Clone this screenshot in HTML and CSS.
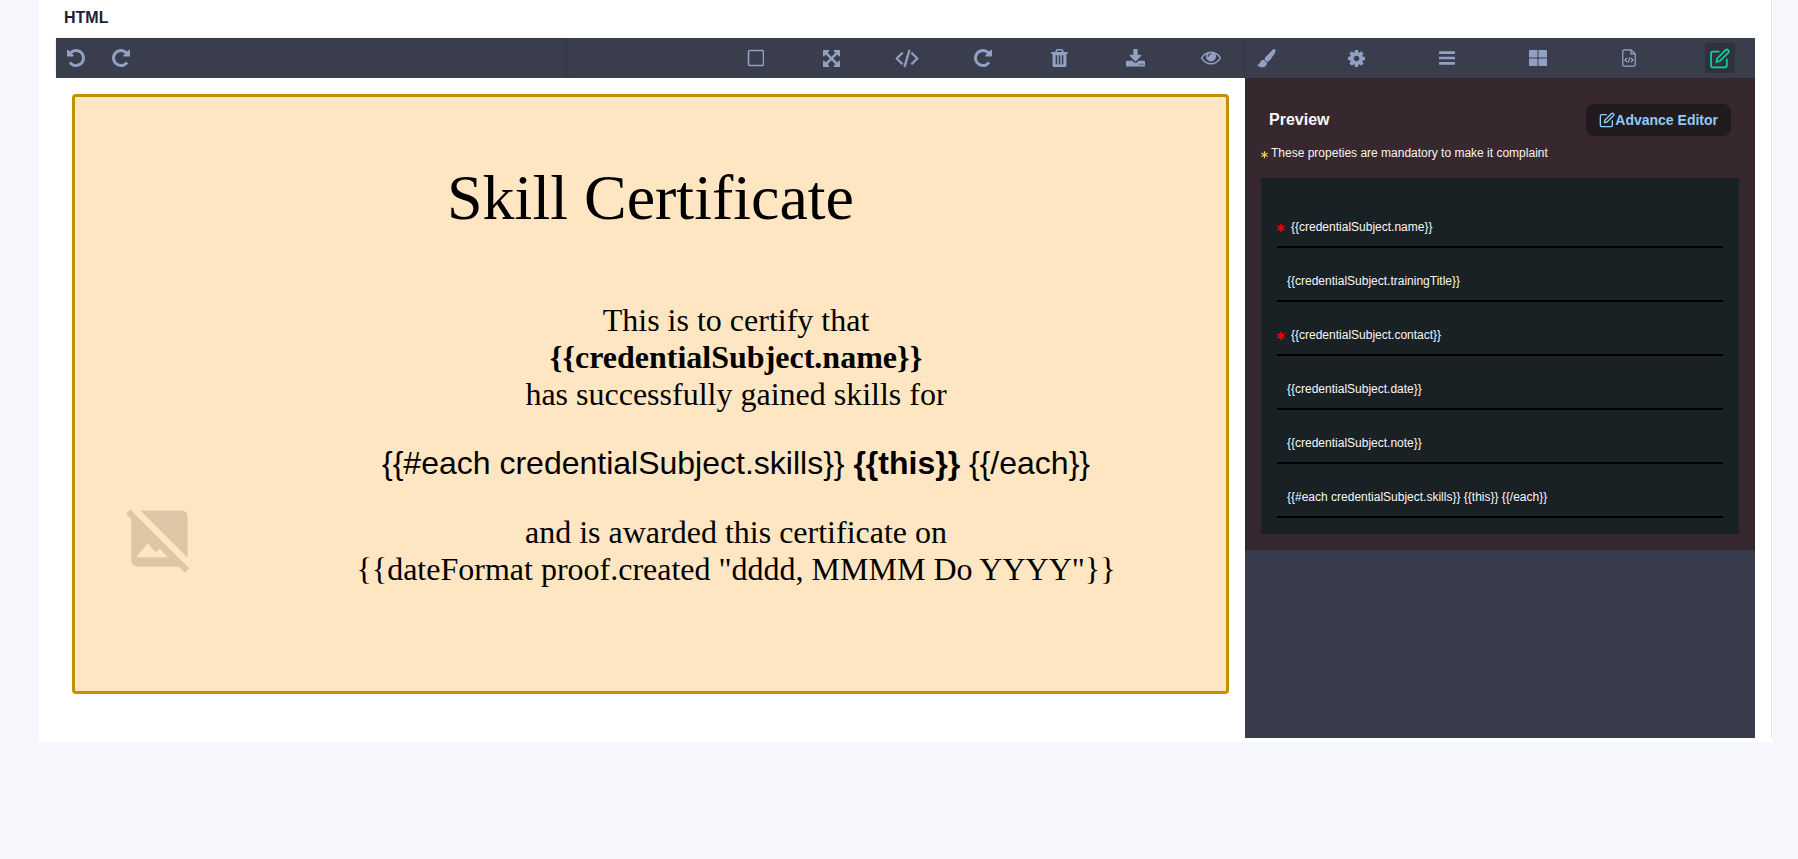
FILE: index.html
```html
<!DOCTYPE html>
<html lang="en">
<head>
<meta charset="utf-8">
<title>HTML</title>
<link rel="stylesheet" href="styles.css">
</head>
<body>
<main class="card">
  <div class="inner">
    <header class="title-bar">HTML</header>
    <section class="editor">
      <nav class="toolbar">
        <div class="tool-left">
          <button class="tool"><svg class="ic ic-undo" viewBox="128 128 1536 1536"><path d="M1664 256v448q0 26-19 45t-45 19h-448q-42 0-59-40-17-39 14-69l138-138q-148-137-349-137-104 0-198.500 40.500t-163.500 109.500-109.500 163.500-40.500 198.500 40.500 198.500 109.500 163.500 163.500 109.500 198.500 40.500q119 0 225-52t179-147q7-10 23-12 14 0 25 9l137 138q9 8 9.500 20.500t-7.500 22.500q-109 132-264 204.500t-327 72.500q-156 0-298-61t-245-164-164-245-61-298 61-298 164-245 245-164 298-61q147 0 284.500 55.500t244.500 156.500l130-129q29-31 70-14 39 17 39 59z"/></svg></button>
          <button class="tool"><svg class="ic" viewBox="128 128 1536 1536"><path d="M1664 256v448q0 26-19 45t-45 19h-448q-42 0-59-40-17-39 14-69l138-138q-148-137-349-137-104 0-198.500 40.500t-163.500 109.500-109.500 163.500-40.500 198.500 40.500 198.500 109.500 163.500 163.500 109.500 198.500 40.500q119 0 225-52t179-147q7-10 23-12 14 0 25 9l137 138q9 8 9.500 20.500t-7.500 22.500q-109 132-264 204.500t-327 72.500q-156 0-298-61t-245-164-164-245-61-298 61-298 164-245 245-164 298-61q147 0 284.500 55.500t244.500 156.500l130-129q29-31 70-14 39 17 39 59z"/></svg></button>
        </div>
        <div class="tool-mid">
          <button class="tool-wide"><svg class="ic ic-sq" viewBox="-1 0 18 18"><rect x="1.500" y="1.500" width="15" height="15" rx="1.500"/></svg></button>
          <button class="tool-wide"><svg class="ic ic-17" viewBox="128 128 1536 1536"><path d="M1411 541l-355 355 355 355 144-144q29-31 70-14 39 17 39 59v448q0 26-19 45t-45 19h-448q-42 0-59-40-17-39 14-69l144-144-355-355-355 355 144 144q31 30 14 69-17 40-59 40H192q-26 0-45-19t-19-45v-448q0-42 40-59 39-17 69 14l144 144 355-355-355-355-144 144q-19 19-45 19-12 0-24-5-40-17-40-59V192q0-26 19-45t45-19h448q42 0 59 40 17 39-14 69L541 381l355 355 355-355-144-144q-31-30-14-69 17-40 59-40h448q26 0 45 19t19 45v448q0 42-39 59-13 5-25 5-26 0-45-19z"/></svg></button>
          <button class="tool-wide"><svg class="ic ic-code" viewBox="-60 30 1912 1860"><path d="M553 1399l-50 50q-10 10-23 10t-23-10L-9 983q-10-10-10-23t10-23l466-466q10-10 23-10t23 10l50 50q10 10 10 23t-10 23L160 960l393 393q10 10 10 23t-10 23zm591-1067L771 1623q-4 13-15.500 19.500T732 1645l-62-17q-13-4-19.500-15.500T648 1588l373-1291q4-13 15.500-19.500t23.500-2.500l62 17q13 4 19.500 15.500t2.500 24.500zm657 651l-466 466q-10 10-23 10t-23-10l-50-50q-10-10-10-23t10-23l393-393-393-393q-10-10-10-23t10-23l50-50q10-10 23-10t23 10l466 466q10 10 10 23t-10 23z"/></svg></button>
          <button class="tool-wide"><svg class="ic" viewBox="128 128 1536 1536"><path d="M1664 256v448q0 26-19 45t-45 19h-448q-42 0-59-40-17-39 14-69l138-138q-148-137-349-137-104 0-198.500 40.500t-163.500 109.500-109.500 163.500-40.500 198.500 40.500 198.500 109.500 163.500 163.500 109.500 198.500 40.500q119 0 225-52t179-147q7-10 23-12 14 0 25 9l137 138q9 8 9.500 20.500t-7.500 22.500q-109 132-264 204.500t-327 72.500q-156 0-298-61t-245-164-164-245-61-298 61-298 164-245 245-164 298-61q147 0 284.500 55.500t244.500 156.500l130-129q29-31 70-14 39 17 39 59z"/></svg></button>
          <button class="tool-wide"><svg class="ic ic-trash" viewBox="192 128 1408 1536"><path d="M704 1376V672q0-14-9-23t-23-9h-64q-14 0-23 9t-9 23v704q0 14 9 23t23 9h64q14 0 23-9t9-23zm256 0V672q0-14-9-23t-23-9h-64q-14 0-23 9t-9 23v704q0 14 9 23t23 9h64q14 0 23-9t9-23zm256 0V672q0-14-9-23t-23-9h-64q-14 0-23 9t-9 23v704q0 14 9 23t23 9h64q14 0 23-9t9-23zM672 384h448l-48-117q-7-9-17-11H738q-10 2-17 11zm928 32v64q0 14-9 23t-23 9h-96v948q0 83-47 143.500t-113 60.500H480q-66 0-113-58.500T320 1464V512h-96q-14 0-23-9t-9-23v-64q0-14 9-23t23-9h309l70-167q15-37 54-63t79-26h320q40 0 79 26t54 63l70 167h309q14 0 23 9t9 23z"/></svg></button>
          <button class="tool-wide"><svg class="ic ic-down" viewBox="64 0 1664 1536"><path d="M1344 1344q0-26-19-45t-45-19-45 19-19 45 19 45 45 19 45-19 19-45zm256 0q0-26-19-45t-45-19-45 19-19 45 19 45 45 19 45-19 19-45zm128-224v320q0 40-28 68t-68 28H160q-40 0-68-28t-28-68v-320q0-40 28-68t68-28h465l135 136q58 56 136 56t136-56l136-136h464q40 0 68 28t28 68zm-325-569q17 41-14 70l-448 448q-18 19-45 19t-45-19L403 621q-31-29-14-70 17-39 59-39h256V64q0-26 19-45t45-19h256q26 0 45 19t19 45v448h256q42 0 59 39z"/></svg></button>
          <button class="tool-wide"><svg class="ic ic-eye" viewBox="0 64 1792 1792"><path d="M1664 960q-152-236-381-353 61 104 61 225 0 185-131.500 316.500T896 1280t-316.500-131.500T448 832q0-121 61-225-229 117-381 353 133 205 333.500 326.500T896 1408t434.500-121.500T1664 960zM944 576q0-20-14-34t-34-14q-125 0-214.500 89.500T592 832q0 20 14 34t34 14 34-14 14-34q0-86 61-147t147-61q20 0 34-14t14-34zm848 384q0 34-20 69-140 230-376.500 368.500T896 1536t-499.500-139T20 1029Q0 994 0 960t20-69q140-229 376.500-368T896 384t499.500 139T1772 891q20 35 20 69z"/></svg></button>
        </div>
        <div class="tool-right">
          <button class="tool"><svg class="ic ic-brush" viewBox="-1.700 0 24 24"><path d="M21 1.500c1.200 1 .9 2.600.1 4-2 3.500-5 8-7 9.500-1.200.9-3 .8-4-.3s-1-2.800 0-4C11.900 8.500 16 4.500 18.500 2c.8-.7 1.800-1.100 2.500-.5zM8.600 13.500c.6 1.500 2 2.700 3.600 3-.1 2.800-2 5.500-5.500 5.500-2.500 0-5-1-6-3.500 1.500.8 2.500-.2 3-1.500.8-2.500 2.700-3.500 4.900-3.500z"/></svg></button>
          <button class="tool"><svg class="ic ic-17" viewBox="128 128 1536 1536"><path d="M1152 896q0-106-75-181t-181-75-181 75-75 181 75 181 181 75 181-75 75-181zm512-109v222q0 12-8 23t-20 13l-185 28q-19 54-39 91 35 50 107 138 10 12 10 25t-9 23q-27 37-99 108t-94 71q-12 0-26-9l-138-108q-44 23-91 38-16 136-29 186-7 28-36 28H785q-14 0-24.500-8.500T749 1634l-28-184q-49-16-90-37l-141 107q-10 9-25 9-14 0-25-11-126-114-165-168-7-10-7-23 0-12 8-23 15-21 51-66.500t54-70.500q-27-50-41-99l-183-27q-13-2-21-12.500t-8-23.500V783q0-12 8-23t19-13l186-28q14-46 39-92-40-57-107-138-10-12-10-24 0-10 9-23 26-36 98.500-107.500T465 263q13 0 26 10l138 107q44-23 91-38 16-136 29-186 7-28 36-28h222q14 0 24.500 8.500T1043 158l28 184q49 16 90 37l142-107q9-9 24-9 13 0 25 10 129 119 165 170 7 8 7 22 0 12-8 23-15 21-51 66.500t-54 70.500q26 50 41 98l183 28q13 2 21 12.500t8 23.500z"/></svg></button>
          <button class="tool"><svg class="ic ic-bars" viewBox="128 128 1536 1536"><path d="M1664 1344v128q0 26-19 45t-45 19H192q-26 0-45-19t-19-45v-128q0-26 19-45t45-19h1408q26 0 45 19t19 45zm0-512v128q0 26-19 45t-45 19H192q-26 0-45-19t-19-45V832q0-26 19-45t45-19h1408q26 0 45 19t19 45zm0-512v128q0 26-19 45t-45 19H192q-26 0-45-19t-19-45V320q0-26 19-45t45-19h1408q26 0 45 19t19 45z"/></svg></button>
          <button class="tool"><svg class="ic ic-grid" viewBox="0 0 18 16"><rect x="0" y="0" width="8.500" height="7.500" rx=".6"/><rect x="9.500" y="0" width="8.500" height="7.500" rx=".6"/><rect x="0" y="8.500" width="8.500" height="7.500" rx=".6"/><rect x="9.500" y="8.500" width="8.500" height="7.500" rx=".6"/></svg></button>
          <button class="tool"><svg class="ic ic-file" viewBox="0 0 14 18"><path d="M9 .8H2.200A1.400 1.400 0 0 0 .8 2.200v13.600a1.400 1.400 0 0 0 1.400 1.400h9.600a1.400 1.400 0 0 0 1.400-1.400V4.800z"/><path d="M9 .8v4h4.200M5 9l-2 2 2 2M9 9l2 2-2 2M7.800 8.300l-1.600 5.400"/></svg></button>
          <button class="tool tool-active"><svg class="ic-edit" viewBox="0.800 0 24 24"><path d="M11 4H4a2 2 0 0 0-2 2v14a2 2 0 0 0 2 2h14a2 2 0 0 0 2-2v-7"/><path d="M18.500 2.500a2.121 2.121 0 0 1 3 3L12 15l-4 1 1-4 9.500-9.500z"/></svg></button>
        </div>
      </nav>
      <div class="stage">
        <div class="canvas">
          <article class="cert">
            <h1 class="cert-title">Skill Certificate</h1>
            <div class="cert-row">
              <div class="cert-media">
                <svg class="placeholder" viewBox="0 0 24 24"><path class="ph-fill" d="M21 18.150 5.850 3H19a2 2 0 0 1 2 2z"/><path class="ph-fill" fill-rule="evenodd" d="M20.100 22.900 18.180 21H5a2 2 0 0 1-2-2V5.820L1.300 4.100 2.700 2.700l18.800 18.800zM4.500 18h10.200l-2.700-2.700-1.300 1.100-2.450-2.900z"/></svg>
              </div>
              <div class="cert-body">
                <p class="cert-p">This is to certify that<br><b>{{credentialSubject.name}}</b><br>has successfully gained skills for</p>
                <p class="cert-p cert-sans">{{#each credentialSubject.skills}} <b>{{this}}</b> {{/each}}</p>
                <p class="cert-p">and is awarded this certificate on<br>{{dateFormat proof.created "dddd, MMMM Do YYYY"}}</p>
              </div>
            </div>
          </article>
        </div>
        <aside class="side">
          <div class="preview">
            <div class="preview-head">
              <h2 class="preview-title">Preview</h2>
              <button class="adv-btn"><svg class="adv-ic" viewBox="0 0 24 24"><path d="M11 4H4a2 2 0 0 0-2 2v14a2 2 0 0 0 2 2h14a2 2 0 0 0 2-2v-7"/><path d="M18.500 2.500a2.121 2.121 0 0 1 3 3L12 15l-4 1 1-4 9.500-9.500z"/></svg>Advance Editor</button>
            </div>
            <p class="note"><svg class="star star-y" viewBox="0 0 8 8"><path d="M4 0v8M.5 2l7 4M7.500 2l-7 4"/></svg>These propeties are mandatory to make it complaint</p>
            <div class="fields">
              <div class="field field-req"><svg class="star star-r" viewBox="0 0 8 8"><path d="M4 0v8M.5 2l7 4M7.500 2l-7 4"/></svg>{{credentialSubject.name}}</div>
              <div class="field">{{credentialSubject.trainingTitle}}</div>
              <div class="field field-req"><svg class="star star-r" viewBox="0 0 8 8"><path d="M4 0v8M.5 2l7 4M7.500 2l-7 4"/></svg>{{credentialSubject.contact}}</div>
              <div class="field">{{credentialSubject.date}}</div>
              <div class="field">{{credentialSubject.note}}</div>
              <div class="field">{{#each credentialSubject.skills}} {{this}} {{/each}}</div>
            </div>
          </div>
        </aside>
      </div>
    </section>
  </div>
</main>
</body>
</html>
```
FILE: styles.css
```css
* { box-sizing: border-box; }
html, body { margin: 0; padding: 0; }
body {
  background: #f5f7fc;
  height: 859px;
  overflow: hidden;
  font-family: "Liberation Sans", Arial, sans-serif;
}
.card {
  margin-left: 39px;
  width: 1734px;
  height: 742px;
  background: #fff;
  padding-right: 1px;
}
.inner {
  height: 738px;
  border-right: 1px solid #e2e4ea;
}
.title-bar {
  height: 38px;
  padding: 9px 0 0 25px;
  font-size: 16px;
  line-height: 18px;
  font-weight: 700;
  color: #1c2333;
}
.editor {
  margin-left: 17px;
  width: 1699px;
}
.toolbar {
  display: flex;
  height: 40px;
  background: #3a3d4c;
}
.tool-left {
  display: flex;
  align-items: center;
  gap: 15px;
  width: 510px;
  padding-left: 5px;
  border-right: 1px solid #363946;
  box-shadow: 0 0 3px rgba(0,0,0,.12);
}
.tool-mid {
  display: flex;
  align-items: center;
  gap: 6px;
  width: 679px;
  padding-left: 154px;
  border-right: 1px solid #32343f;
}
.tool-right {
  display: flex;
  align-items: center;
  gap: 61px;
  padding-left: 5px;
}
.tool, .tool-wide {
  display: flex;
  align-items: center;
  justify-content: center;
  height: 30px;
  padding: 0;
  border: 0;
  border-radius: 3px;
  background: transparent;
}
.tool { width: 30px; }
.tool-wide { width: 70px; flex-shrink: 0; }
.tool-active { background: #2f323c; }
.ic {
  width: 18px;
  height: 18px;
  fill: #91a0c4;
}
.ic-undo { transform: scaleX(-1); }
.ic-17 { width: 17px; height: 17px; }
.ic-sq { fill: none; stroke: #91a0c4; stroke-width: 1.600; }
.ic-code { width: 24px; height: 23px; stroke: #91a0c4; stroke-width: 60; }
.ic-trash { width: 17px; height: 18.500px; }
.ic-down { width: 19px; height: 17.500px; }
.ic-eye { width: 20px; height: 20px; }
.ic-bars { width: 16px; height: 16px; }
.ic-brush { width: 21px; height: 21px; }
.ic-file { width: 14px; height: 18px; }
.ic-file path { fill: none; stroke: #9aa8c8; stroke-width: 1.200; }
.ic-edit {
  width: 21px;
  height: 21px;
  fill: none;
  stroke: #00d5a3;
  stroke-width: 2;
  stroke-linecap: round;
  stroke-linejoin: round;
}
.stage { display: flex; }
.canvas {
  width: 1189px;
  height: 660px;
  padding: 16px 16px 0;
  background: #fff;
}
.cert {
  height: 600px;
  padding-top: 64px;
  background: #fee6c2;
  border: 3px solid #c28f00;
  border-radius: 4px;
  color: #000;
  font-family: "Liberation Serif", "Times New Roman", serif;
}
.cert-title {
  margin: 0 0 67px;
  font-size: 64px;
  font-weight: 400;
  line-height: 74px;
  text-align: center;
}
.cert-row { display: flex; }
.cert-media {
  display: flex;
  align-items: flex-end;
  width: 171px;
  padding: 0 0 12px 47px;
}
.placeholder { width: 75px; height: 75px; display: block; }
.ph-fill { fill: #dcc6a6; }
.cert-body { flex: 1; text-align: center; }
.cert-p {
  margin: 0 0 32px;
  font-size: 32px;
  line-height: 37px;
}
.cert-p:last-child { margin-bottom: 0; }
.cert-sans { font-family: "Liberation Sans", Arial, sans-serif; }
.side {
  width: 510px;
  height: 660px;
  background: #383b4b;
}
.preview {
  height: 472px;
  padding: 0 16px;
  background: #372830;
}
.preview-head {
  display: flex;
  align-items: center;
  justify-content: space-between;
  padding: 26px 8px 0;
}
.preview-title {
  margin: 0;
  font-size: 16px;
  font-weight: 700;
  line-height: 32px;
  color: #f7f7f7;
}
.adv-btn {
  display: flex;
  align-items: center;
  height: 32px;
  padding: 0 13px;
  border: 0;
  border-radius: 8px;
  background: #211a1f;
  color: #90caf9;
  font: 700 14px "Liberation Sans", Arial, sans-serif;
}
.adv-ic {
  width: 16px;
  height: 16px;
  fill: none;
  stroke: #90caf9;
  stroke-width: 2;
  stroke-linecap: round;
  stroke-linejoin: round;
}
.note {
  display: flex;
  align-items: center;
  height: 14px;
  margin: 10px 0 18px;
  font-size: 12px;
  line-height: 14px;
  color: #f8f4f0;
}
.star {
  flex-shrink: 0;
  fill: none;
  stroke-width: 1.400;
}
.star-y { width: 7px; height: 7.500px; margin: 4px 3px 0 0; stroke: #edd060; }
.star-r { width: 8px; height: 8px; margin: 0 6px 2px -1px; stroke: #f00000; stroke-width: 1.700; }
.fields {
  height: 356px;
  padding: 16px;
  background: #1a2125;
}
.field {
  display: flex;
  align-items: flex-end;
  height: 54px;
  padding: 0 0 12px 10px;
  border-bottom: 2px solid #000;
  font-size: 12px;
  line-height: 14px;
  color: #f8f8f8;
}
.field-req { padding-left: 1px; }
```
